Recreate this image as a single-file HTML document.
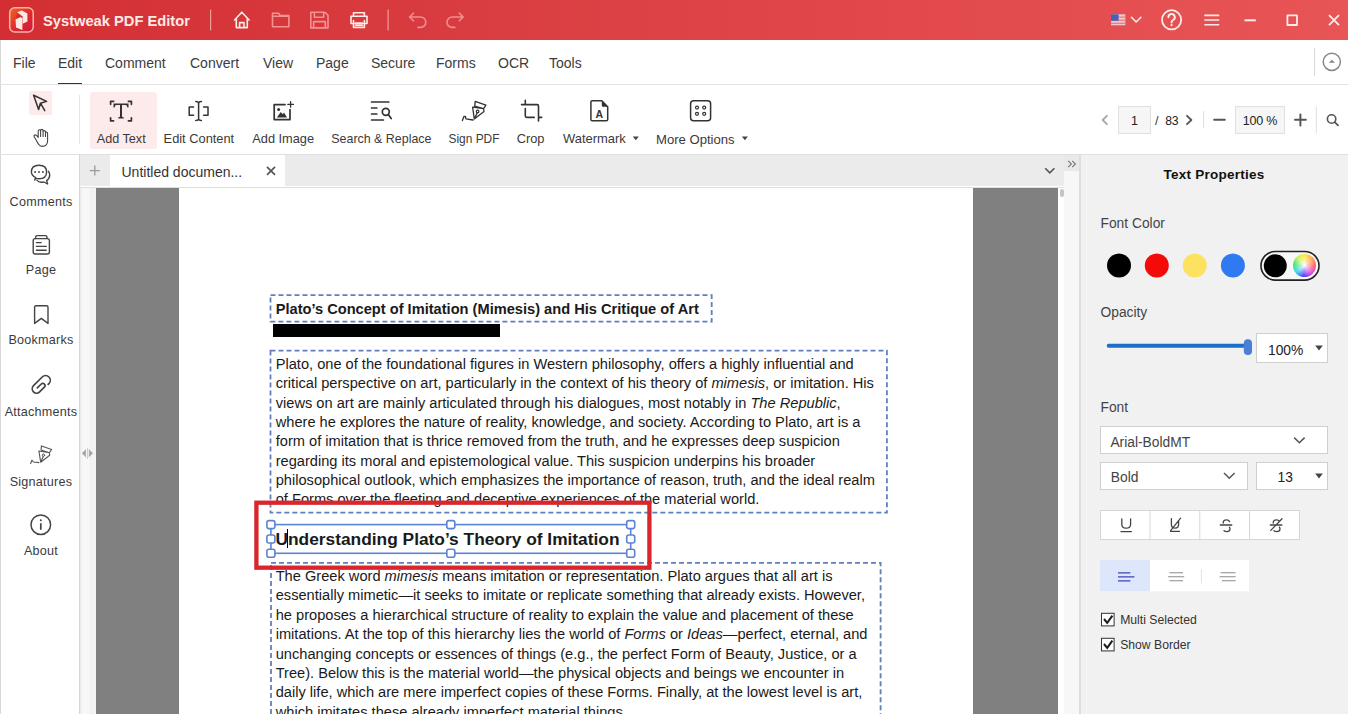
<!DOCTYPE html>
<html><head><meta charset="utf-8">
<style>
*{margin:0;padding:0;box-sizing:border-box}
html,body{width:1348px;height:714px;overflow:hidden;background:#fff;font-family:"Liberation Sans",sans-serif;color:#333}
.a{position:absolute}
.t{position:absolute;white-space:nowrap;line-height:1}
svg{position:absolute;overflow:visible}
#title{left:0;top:0;width:1348px;height:40px;background:linear-gradient(90deg,#d32f33 0%,#d93d41 35%,#e24a4d 70%,#e85556 100%)}
.menu{font-size:14px;color:#3c3c3c;top:56.4px}
.lbl{font-size:12.8px;color:#3a3a3a;top:133px}
.side{font-size:12.6px;color:#3a3a3a;letter-spacing:0.25px}
.doc{font-size:14.63px;color:#1a1a1a;line-height:19.3px;position:absolute;white-space:nowrap}
.rp{font-size:13.8px;color:#444}
</style></head><body>
<!-- TITLE BAR -->
<div id="title" class="a"></div>
<svg width="1348" height="40" style="left:0;top:0">
 <defs>
  <linearGradient id="lg" x1="0" y1="0" x2="1" y2="1">
   <stop offset="0" stop-color="#f2641c"/><stop offset="0.55" stop-color="#dc2a30"/><stop offset="1" stop-color="#d0173a"/>
  </linearGradient>
 </defs>
 <rect x="9.7" y="7.8" width="23.5" height="24.2" rx="5" fill="url(#lg)" stroke="#f6b3ac" stroke-width="1.5"/>
 <polygon points="17,12.3 21.8,10.6 27.4,13.4 27.4,21.6 22.6,23.8 22.6,16.4" fill="#fde9e4"/>
 <polygon points="15.6,19.2 20.6,16.9 22.4,18 22.4,30 16,27.6" fill="#fde9e4"/>
 <polygon points="22.4,18 22.6,16.4 17,12.3 15.6,19.2 20.6,16.9" fill="#c8202c" opacity="0.5"/>
 <!-- separators -->
 <rect x="210" y="9.5" width="1.2" height="21" fill="#f09a9a"/>
 <rect x="387.5" y="9.5" width="1.2" height="21" fill="#f09a9a"/>
 <g fill="none" stroke-width="1.6" stroke-linejoin="round" stroke-linecap="round">
  <!-- home -->
  <path d="M234.5 20 L241.8 12.2 L249.1 20 M236.3 18.2 V27.6 H247.3 V18.2 M239.6 27.6 V22.6 H244 V27.6" stroke="#fdebe8"/>
  <!-- folder -->
  <path d="M272.5 13.3 H278.5 L280.3 15.5 H288.9 V26.8 H272.5 Z M272.5 16.2 H288.9" stroke="#f39393"/>
  <!-- save -->
  <path d="M310.8 12.2 H325 L328 15.2 V27.9 H310.8 Z M314.3 12.2 V17.3 H323.7 V12.2 M313.6 27.9 V21.6 H325.3 V27.9" stroke="#f39393"/>
  <!-- print -->
  <path d="M353.5 16.3 V12.8 H364.4 V16.3 M351 16.3 H367 V23.5 H351 Z M353.5 20.5 V27.4 H364.4 V20.5 M355.6 23 H362.3 M355.6 25.3 H362.3" stroke="#fdebe8"/>
  <!-- undo -->
  <path d="M413.5 13.2 L409.6 17 L413.5 20.8 M409.8 17 H420.6 A5.2 5.2 0 0 1 420.6 27.4 H418" stroke="#f08f8f"/>
  <!-- redo -->
  <path d="M459.3 13.2 L463.2 17 L459.3 20.8 M463 17 H452.2 A5.2 5.2 0 0 0 452.2 27.4 H454.8" stroke="#f08f8f"/>
 </g>
 <!-- flag -->
 <rect x="1111" y="14.3" width="14.3" height="11" fill="#f4c6c8"/>
 <rect x="1111" y="16.5" width="14.3" height="1.2" fill="#e77b82"/>
 <rect x="1111" y="19.6" width="14.3" height="1.2" fill="#e77b82"/>
 <rect x="1111" y="22.7" width="14.3" height="1.2" fill="#e77b82"/>
 <rect x="1111" y="14.3" width="7.6" height="6.5" fill="#4a5fb8"/>
 <g fill="none" stroke="#fdebe8" stroke-width="1.6" stroke-linecap="round" stroke-linejoin="round">
  <path d="M1131.5 17.3 L1136.2 22 L1140.9 17.3"/>
  <circle cx="1171.6" cy="19.8" r="9.6" stroke-width="1.8"/>
  <path d="M1168.4 17.2 A3.2 3.2 0 1 1 1173 20.1 Q1171.6 20.8 1171.6 22.6" stroke-width="2"/>
  <path d="M1204.3 15.4 H1219.2 M1204.3 20 H1219.2 M1204.3 24.7 H1219.2" stroke-linecap="butt"/>
  <path d="M1244.5 20.3 H1255.8" stroke-width="2" stroke-linecap="butt"/>
  <rect x="1287.4" y="15.4" width="9.6" height="9.6" stroke-width="1.8"/>
  <path d="M1329 15.2 L1339 25.2 M1339 15.2 L1329 25.2" stroke-width="1.8" stroke-linecap="butt"/>
 </g>
 <circle cx="1171.6" cy="25.1" r="1.1" fill="#fdebe8"/>
</svg>
<div class="t" style="left:43px;top:13.8px;font-size:14.7px;font-weight:bold;color:#fdeae6">Systweak PDF Editor</div>

<!-- MENU BAR -->
<div class="a" style="left:0;top:40px;width:1px;height:674px;background:#d8d8d8"></div>
<div class="t menu" style="left:13px">File</div>
<div class="t menu" style="left:58px">Edit</div>
<div class="a" style="left:58px;top:83px;width:24px;height:2px;background:#333"></div>
<div class="t menu" style="left:105px">Comment</div>
<div class="t menu" style="left:190px">Convert</div>
<div class="t menu" style="left:263px">View</div>
<div class="t menu" style="left:316px">Page</div>
<div class="t menu" style="left:371px">Secure</div>
<div class="t menu" style="left:436px">Forms</div>
<div class="t menu" style="left:498px">OCR</div>
<div class="t menu" style="left:549px">Tools</div>
<div class="a" style="left:1314px;top:48px;width:1px;height:28px;background:#d8d8d8"></div>
<div class="a" style="left:0;top:84px;width:1348px;height:1px;background:#e3e3e3"></div>

<!-- TOOLBAR -->
<div class="a" style="left:28.5px;top:91px;width:23.5px;height:23.5px;background:#fdeaea;border-radius:2px"></div>
<div class="a" style="left:79px;top:95px;width:1px;height:49px;background:#e4e4e4"></div>
<div class="a" style="left:90px;top:91.5px;width:66.5px;height:57px;background:#fdeaea;border-radius:3px"></div>
<svg width="1348" height="160" style="left:0;top:0">
 <g fill="none" stroke="#333" stroke-width="1.5" stroke-linejoin="round" stroke-linecap="round">
  <!-- arrow -->
  <path d="M33.6 95.2 L46.6 101.4 L40.4 103.2 L38.6 109.5 Z M40.6 103.3 L44.8 110.6" />
  <!-- hand -->
  <path d="M36.2 140 L34.4 137.2 Q33.4 135.6 34.8 135 Q36 134.6 37.2 136.2 L38.2 137.5 V131.3 Q38.2 129.8 39.4 129.8 Q40.6 129.8 40.6 131.3 V136.4 M40.6 131.3 Q40.6 129.4 41.9 129.4 Q43.1 129.4 43.1 131.2 V136.4 M43.1 132 Q43.1 130.6 44.3 130.6 Q45.5 130.6 45.5 132 V136.4 M45.5 133.2 Q45.5 132 46.6 132 Q47.6 132 47.6 133.4 V140.6 Q47.6 146.4 42.2 146.4 Q38.8 146.4 36.2 140" stroke-width="1.1" stroke="#444"/>
  <!-- add text brackets -->
  <path d="M110.6 104.3 V101.3 H113.6 M128.4 101.3 H131.4 V104.3 M131.4 117.8 V120.8 H128.4 M113.6 120.8 H110.6 V117.8" stroke-width="1.7"/>
  <!-- edit content -->
  <path d="M193.6 106.9 H189.2 V115.3 H193.6 M203.6 106.9 H208 V115.3 H203.6 M198.6 102.6 V119.6 M195.8 101.6 Q198.6 101.6 198.6 103.4 Q198.6 101.6 201.4 101.6 M195.8 120.5 Q198.6 120.5 198.6 118.8 Q198.6 120.5 201.4 120.5"/>
  <!-- add image -->
  <path d="M285 104.6 H274.2 V119.6 H290 V109.6" stroke-width="1.7"/>
  <path d="M290.6 101.6 V107.2 M287.8 104.4 H293.4" stroke-width="1.3"/>
  <!-- search & replace -->
  <path d="M371.6 102 H388.8 M371.6 108 H376.8 M371.6 114 H376.8 M371.6 120 H383.4 M388.5 114.7 L391.2 118.6" stroke-width="1.7"/>
  <circle cx="385.8" cy="111.8" r="3.5" stroke-width="1.7"/>
  <!-- sign pdf -->
  <path d="M475.2 101.4 L485.9 105.2 L483.6 108.6 L474.7 106.1 Z M472.6 107.2 L483.6 108.6 L484 111.6 L474.3 118.9 Z M477.3 112.8 L474.6 118.4 M462.4 120.6 L464 116.3 L465.5 116.7 L465.9 118.9 L473.1 120" stroke-width="1.3"/>
  <circle cx="477.6" cy="111.4" r="1.3" stroke-width="1.2"/>
  <!-- crop -->
  <path d="M525.3 100.4 V104.6 M521.5 104.6 H537.2 Q538.5 104.6 538.5 106 V121 M525.3 108.6 V116.1 Q525.3 117.4 526.6 117.4 H534.2 M538.5 117.4 H541.7" stroke-width="1.6"/>
  <!-- watermark -->
  <path d="M601.8 100.8 H592.2 Q590.9 100.8 590.9 102.1 V119.4 Q590.9 120.7 592.2 120.7 H606.4 Q607.7 120.7 607.7 119.4 V106.8 Z" stroke-width="1.5"/>
  <!-- more options -->
  <rect x="690.6" y="100.8" width="20" height="20" rx="3" stroke-width="1.5"/>
  <circle cx="697" cy="107.6" r="1.5" stroke-width="1.2"/>
  <circle cx="704.2" cy="107.6" r="1.5" stroke-width="1.2"/>
  <circle cx="697" cy="113.8" r="1.5" stroke-width="1.2"/>
  <circle cx="704.2" cy="113.8" r="1.5" stroke-width="1.2"/>
 </g>
 <g fill="#333">
  <path d="M113.5 103.6 H128.5 V107.4 H127.4 Q127.2 105 125.2 105 H122 V116.6 Q122 117.4 123.8 117.4 V118.4 H118.2 V117.4 Q120 117.4 120 116.6 V105 H116.8 Q114.8 105 114.6 107.4 H113.5 Z"/>
  <circle cx="278.6" cy="109.6" r="1.5"/>
  <path d="M276.8 117.4 L280.8 112 L282.8 114.2 L284 112.6 L287 117.4 Z"/>
  <path d="M601.8 100.8 L607.7 106.8 H603.1 Q601.8 106.8 601.8 105.5 Z"/>
  <path d="M632.8 136.4 H638.8 L635.8 140.2 Z M741.9 136.4 H747.9 L744.9 140.2 Z" fill="#444"/>
 </g>
 <text x="599.3" y="118" font-family="Liberation Sans" font-weight="bold" font-size="10.5" fill="#333" text-anchor="middle">A</text>
</svg>
<div class="t lbl" style="left:71.2px;width:100px;text-align:center;font-size:12.65px">Add Text</div>
<div class="t lbl" style="left:148.9px;width:100px;text-align:center;font-size:12.84px">Edit Content</div>
<div class="t lbl" style="left:233.2px;width:100px;text-align:center;font-size:12.79px">Add Image</div>
<div class="t lbl" style="left:331.3px;width:100px;text-align:center;font-size:12.43px">Search &amp; Replace</div>
<div class="t lbl" style="left:424px;width:100px;text-align:center;font-size:11.9px;top:133.7px">Sign PDF</div>
<div class="t lbl" style="left:480.6px;width:100px;text-align:center;font-size:12.8px">Crop</div>
<div class="t lbl" style="left:544.4px;width:100px;text-align:center;font-size:12.95px">Watermark</div>
<div class="t lbl" style="left:645.3px;width:100px;text-align:center;font-size:13.1px">More Options</div>

<!-- page nav -->
<svg width="1348" height="160" style="left:0;top:0">
 <g fill="none" stroke-width="1.5" stroke-linecap="round" stroke-linejoin="round">
  <path d="M1107 115.8 L1102.6 120 L1107 124.2" stroke="#a8a8a8" stroke-width="1.8"/>
  <path d="M1187 115.8 L1191.4 120 L1187 124.2" stroke="#555" stroke-width="1.8"/>
  <path d="M1214.2 119.8 H1224.8" stroke="#555" stroke-width="2"/>
  <path d="M1295 119.8 H1305.8 M1300.4 114.4 V125.4" stroke="#555" stroke-width="2"/>
  <circle cx="1331.6" cy="119" r="4.2" stroke="#555" stroke-width="1.6"/>
  <path d="M1334.7 122.1 L1338 125.4" stroke="#555" stroke-width="1.8"/>
  <circle cx="1331.8" cy="61.8" r="8.6" stroke="#888" stroke-width="1.5"/>
 </g>
 <path d="M1328.7 62.7 L1331.9 59.7 L1335.1 62.7 Z" fill="#888"/>
 <rect x="1203" y="111" width="1" height="17" fill="#e0e0e0"/>
 <rect x="1315.8" y="106.4" width="1" height="27" fill="#e0e0e0"/>
 <rect x="1118.5" y="106.5" width="32" height="27" fill="#f6f6f6" stroke="#e0e0e0" stroke-width="1"/>
 <rect x="1235.5" y="106.5" width="49" height="27" fill="#f6f6f6" stroke="#e0e0e0" stroke-width="1"/>
</svg>
<div class="t" style="left:1118.5px;width:32px;text-align:center;top:114.6px;font-size:12.5px;color:#222">1</div>
<div class="t" style="left:1155px;top:114.6px;font-size:12.5px;color:#333">/</div><div class="t" style="left:1165.3px;top:114.6px;font-size:12.2px;color:#222;letter-spacing:-0.4px">83</div>
<div class="t" style="left:1235.5px;width:49px;text-align:center;top:114.7px;font-size:12.5px;color:#222;letter-spacing:-0.15px">100 %</div>
<div class="a" style="left:0;top:154px;width:1348px;height:1px;background:#e0e0e0"></div>

<!-- LEFT SIDEBAR -->
<div class="a" style="left:79px;top:155px;width:1.6px;height:559px;background:#d6d6d6"></div>
<svg width="80" height="714" style="left:0;top:0">
 <g fill="none" stroke="#444" stroke-width="1.4" stroke-linejoin="round" stroke-linecap="round">
  <!-- comments -->
  <path d="M34.6 180 L35.8 177.6 Q31.4 175.4 31.4 172 Q31.4 165.3 39 165.3 Q46.6 165.3 46.6 172 Q46.6 178.7 39 178.7 Q37.4 178.7 36 178.3 Z"/>
  <path d="M48.4 171.2 Q49.7 172.8 49.7 175 Q49.7 178.6 46.6 180.6 L47.6 184 L43.8 182 Q42.2 182.3 41 182.3 Q38.6 182.3 37 180.4"/>
  <!-- page -->
  <rect x="33.2" y="238.6" width="16.2" height="15.4" rx="2"/>
  <path d="M35.6 238.6 V237.2 Q35.6 235.6 37.2 235.6 H45.4 Q47 235.6 47 237.2 V238.6"/>
  <path d="M36.4 242.6 H41.2 M36.4 246.4 H46.2 M36.4 250.2 H46.2"/>
  <!-- bookmark -->
  <path d="M34.6 323.4 V307.2 Q34.6 305.8 36 305.8 H46.6 Q48 305.8 48 307.2 V323.4 L41.3 318.4 Z"/>
  <!-- attachment -->
  <g transform="translate(41.6,384.3) rotate(45) scale(1.08)">
   <path d="M4.4 -4.2 V-5.2 A4.4 4.4 0 0 0 -4.4 -5.2 V6.2 A4 4 0 0 0 3.6 6.2 V0 A2 2 0 0 0 -0.4 0 V5.2" stroke-width="1.55"/>
  </g>
  <!-- signatures -->
  <path d="M41.4 445.9 L51.7 449.4 L49.4 452.8 L41.1 450.1 Z M38.9 451 L49.4 452.8 L49.7 455.2 L40.7 462.2 Z M43.2 456.5 L40.9 461.8 M30.6 463.5 L31.9 460.2 L33.5 462 L38.9 462.6" stroke-width="1.1" stroke="#555"/>
  <circle cx="43.4" cy="455.2" r="1.2" stroke-width="1" stroke="#555"/>
  <!-- about -->
  <circle cx="40.8" cy="524.7" r="9.8" stroke-width="1.5"/>
  <path d="M40.8 523.2 V529.8" stroke-width="1.7" stroke-linecap="butt"/>
 </g>
 <circle cx="35.1" cy="172" r="0.95" fill="#444"/><circle cx="39" cy="172" r="0.95" fill="#444"/><circle cx="42.9" cy="172" r="0.95" fill="#444"/>
 <circle cx="40.8" cy="520.3" r="1" fill="#444"/>
</svg>
<div class="t side" style="left:0;width:82px;text-align:center;top:196.4px">Comments</div>
<div class="t side" style="left:0;width:82px;text-align:center;top:264px">Page</div>
<div class="t side" style="left:0;width:82px;text-align:center;top:334.2px">Bookmarks</div>
<div class="t side" style="left:0;width:82px;text-align:center;top:406.2px">Attachments</div>
<div class="t side" style="left:0;width:82px;text-align:center;top:475.9px">Signatures</div>
<div class="t side" style="left:0;width:82px;text-align:center;top:545.3px">About</div>

<!-- TAB BAR -->
<div class="a" style="left:80px;top:155px;width:984px;height:31px;background:#ebebeb"></div>
<div class="a" style="left:110px;top:155px;width:175px;height:31px;background:#fff"></div>
<div class="t" style="left:121.5px;top:165px;font-size:14px;color:#333">Untitled documen...</div>
<svg width="1348" height="200" style="left:0;top:0">
 <path d="M94.8 165.6 V175.6 M89.8 170.6 H99.8" stroke="#9a9a9a" stroke-width="1.3" fill="none"/>
 <path d="M267 166.8 L275 174.8 M275 166.8 L267 174.8" stroke="#555" stroke-width="1.7" fill="none"/>
 <path d="M1045.2 168.2 L1049.8 172.8 L1054.4 168.2" stroke="#555" stroke-width="1.6" fill="none"/>
</svg>

<!-- DOC AREA -->
<div class="a" style="left:80px;top:186px;width:984px;height:1px;background:#fff"></div><div class="a" style="left:80px;top:187px;width:984px;height:1px;background:#dedede"></div>
<div class="a" style="left:80px;top:188px;width:16px;height:526px;background:linear-gradient(90deg,#e6e6e6 0,#f4f4f4 1.5px,#f8f8f8 4px,#f8f8f8 9px,#f2f2f2 10px,#f4f4f4 16px)"></div>
<div class="a" style="left:96px;top:188px;width:83px;height:526px;background:#808080"></div>
<div class="a" style="left:179px;top:188px;width:794px;height:526px;background:#fff"></div>
<div class="a" style="left:973px;top:188px;width:85px;height:526px;background:#808080"></div>
<div class="a" style="left:1058px;top:188px;width:6px;height:526px;background:#fff"></div>

<!-- collapse handle -->
<svg width="20" height="20" style="left:80px;top:444px">
 <path d="M5.9 5.3 L1.8 9.3 L5.9 13.3 Z M8.9 5.3 L13 9.3 L8.9 13.3 Z" fill="#a6a6a6"/>
 <rect x="6.9" y="4" width="1.2" height="11" fill="#cfcfcf"/>
</svg>
<!-- DOCUMENT CONTENT -->
<svg width="1348" height="714" style="left:0;top:0">
 <g fill="none" stroke="#5f7fbf" stroke-width="1.8" stroke-dasharray="5 3">
  <rect x="270.5" y="295.2" width="441.2" height="26.5"/>
  <rect x="270.5" y="350.6" width="616.4" height="162"/>
  <rect x="271" y="562.8" width="609.6" height="170"/>
 </g>
</svg>
<div class="a" style="left:273px;top:324px;width:227px;height:13px;background:#000"></div>
<div class="doc" style="left:275.7px;top:301.5px;line-height:1;font-weight:bold">Plato’s Concept of Imitation (Mimesis) and His Critique of Art</div>
<div class="doc" style="left:275.7px;top:355.2px;line-height:19.27px">Plato, one of the foundational figures in Western philosophy, offers a highly influential and<br>critical perspective on art, particularly in the context of his theory of <i>mimesis</i>, or imitation. His<br>views on art are mainly articulated through his dialogues, most notably in <i>The Republic</i>,<br>where he explores the nature of reality, knowledge, and society. According to Plato, art is a<br>form of imitation that is thrice removed from the truth, and he expresses deep suspicion<br>regarding its moral and epistemological value. This suspicion underpins his broader<br>philosophical outlook, which emphasizes the importance of reason, truth, and the ideal realm<br>of Forms over the fleeting and deceptive experiences of the material world.</div>
<div class="doc" style="left:275.7px;top:567px;line-height:19.4px">The Greek word <i>mimesis</i> means imitation or representation. Plato argues that all art is<br>essentially mimetic—it seeks to imitate or replicate something that already exists. However,<br>he proposes a hierarchical structure of reality to explain the value and placement of these<br>imitations. At the top of this hierarchy lies the world of <i>Forms</i> or <i>Ideas</i>—perfect, eternal, and<br>unchanging concepts or essences of things (e.g., the perfect Form of Beauty, Justice, or a<br>Tree). Below this is the material world—the physical objects and beings we encounter in<br>daily life, which are mere imperfect copies of these Forms. Finally, at the lowest level is art,<br>which imitates these already imperfect material things.</div>
<div class="doc" style="left:275.5px;top:530.8px;line-height:1;font-weight:bold;font-size:17.33px">Understanding Plato’s Theory of Imitation</div>
<div class="a" style="left:287px;top:529px;width:1px;height:19px;background:#000"></div>
<svg width="1348" height="714" style="left:0;top:0">
 <rect x="256.4" y="502.7" width="393" height="65" fill="none" stroke="#d8262c" stroke-width="4.3"/>
 <rect x="270.9" y="524.6" width="359.8" height="28.7" fill="none" stroke="#5b83d4" stroke-width="1.6"/>
 <g fill="#fff" stroke="#5b83d4" stroke-width="1.6">
  <rect x="266.9" y="520.6" width="8" height="8" rx="2"/>
  <rect x="446.8" y="520.6" width="8" height="8" rx="2"/>
  <rect x="626.7" y="520.6" width="8" height="8" rx="2"/>
  <rect x="266.9" y="535" width="8" height="8" rx="2"/>
  <rect x="626.7" y="535" width="8" height="8" rx="2"/>
  <rect x="266.9" y="549.3" width="8" height="8" rx="2"/>
  <rect x="446.8" y="549.3" width="8" height="8" rx="2"/>
  <rect x="626.7" y="549.3" width="8" height="8" rx="2"/>
 </g>
</svg>

<!-- RIGHT DIVIDER / PANEL -->
<div class="a" style="left:1064px;top:155px;width:16px;height:559px;background:#f7f7f7"></div>
<div class="a" style="left:1064px;top:155px;width:16px;height:15.5px;background:#e9e9e9"></div>
<svg width="20" height="20" style="left:1064px;top:155px"><path d="M4.2 5.8 L7.4 9 L4.2 12.2 M8.2 5.8 L11.4 9 L8.2 12.2" stroke="#777" stroke-width="1.1" fill="none"/></svg>
<div class="a" style="left:1079px;top:155px;width:2px;height:559px;background:#dedede"></div>
<div class="a" style="left:1081px;top:155px;width:267px;height:559px;background:#f1f1f1"></div><div class="a" style="left:1085.5px;top:155px;width:1px;height:559px;background:#f6f6f6"></div>
<div class="t" style="left:1114px;width:200px;text-align:center;top:168.4px;font-size:13.5px;font-weight:bold;color:#111;letter-spacing:0.25px">Text Properties</div>
<div class="t rp" style="left:1100.5px;top:216.6px">Font Color</div>
<div class="t rp" style="left:1100.5px;top:306.2px">Opacity</div>
<div class="t rp" style="left:1100.5px;top:400.6px">Font</div>
<svg width="1348" height="714" style="left:0;top:0">
 <defs>
  <radialGradient id="cw" cx="0.5" cy="0.5" r="0.5">
   <stop offset="0" stop-color="#fff"/><stop offset="0.35" stop-color="#fff" stop-opacity="0.6"/><stop offset="1" stop-color="#fff" stop-opacity="0"/>
  </radialGradient>
  <linearGradient id="cw1" x1="0" y1="0" x2="1" y2="1">
   <stop offset="0" stop-color="#7be07b"/><stop offset="0.5" stop-color="#f5c06a"/><stop offset="1" stop-color="#e0507a"/>
  </linearGradient>
  <linearGradient id="cw2" x1="0" y1="1" x2="1" y2="0">
   <stop offset="0" stop-color="#5a4ee8" stop-opacity="0.9"/><stop offset="0.5" stop-color="#5a4ee8" stop-opacity="0"/>
  </linearGradient>
 </defs>
 <circle cx="1119" cy="265.5" r="12" fill="#000"/>
 <circle cx="1156.8" cy="265.5" r="12" fill="#f50a0a"/>
 <circle cx="1194.8" cy="265.5" r="12" fill="#fde262"/>
 <circle cx="1232.9" cy="265.5" r="12" fill="#2f7af0"/>
 <rect x="1261" y="251.5" width="58" height="28.6" rx="14.3" fill="#f8f8f8" stroke="#222" stroke-width="1.6"/>
 <circle cx="1275.3" cy="265.8" r="11.5" fill="#000"/>
 <!-- slider -->
 <rect x="1106.7" y="343.8" width="141" height="4" rx="2" fill="#1b6fc8"/>
 <rect x="1243.8" y="339.3" width="8.2" height="15.6" rx="4" fill="#4a7fd6"/>
 <rect x="1256.5" y="333.5" width="71" height="29" fill="#fff" stroke="#cfcfcf" stroke-width="1"/>
 <path d="M1315.2 345.6 H1322.8 L1319 350.4 Z" fill="#444"/>
 <!-- font dropdowns -->
 <rect x="1100.5" y="426.5" width="227" height="27" fill="#fff" stroke="#cfcfcf" stroke-width="1"/>
 <path d="M1294.2 437.6 L1299.4 442.8 L1304.6 437.6" fill="none" stroke="#555" stroke-width="1.5"/>
 <rect x="1100.5" y="462.5" width="147" height="27" fill="#fff" stroke="#cfcfcf" stroke-width="1"/>
 <path d="M1224 473 L1229.3 478.3 L1234.6 473" fill="none" stroke="#555" stroke-width="1.5"/>
 <rect x="1256.5" y="462.5" width="71" height="27" fill="#fff" stroke="#cfcfcf" stroke-width="1"/>
 <path d="M1315.2 473.6 H1322.8 L1319 478.4 Z" fill="#444"/>
 <!-- style buttons -->
 <rect x="1100.5" y="510.5" width="199" height="29" fill="#fff" stroke="#d6d6d6" stroke-width="1"/>
 <path d="M1150 511 V539 M1199.8 511 V539 M1249.6 511 V539" stroke="#d6d6d6" stroke-width="1"/>
 <g fill="none" stroke="#444" stroke-width="1.3" stroke-linecap="round">
  <path d="M1121.8 518.8 V524.2 Q1121.8 528.2 1126.2 528.2 Q1130.6 528.2 1130.6 524.2 V518.8 M1121 531.6 H1131.4"/>
  <path d="M1171.4 518.6 V524.6 Q1171.4 528.2 1175 528.2 Q1178.6 528.2 1178.6 524.6 V521 M1170.6 531.4 H1179.4 M1170.6 530.6 L1180.6 518.2"/>
  <path d="M1223.2 523 Q1223.2 519.9 1226.4 519.9 Q1228.8 519.9 1229.6 521.6 M1220.3 525 H1231.8 M1229.4 527.2 Q1230 528 1230 529 Q1230 531.6 1226.6 531.6 Q1224.8 531.6 1224 530.6"/>
  <path d="M1273.2 523 Q1273.2 519.9 1276.4 519.9 Q1278.8 519.9 1279.6 521.6 M1270.3 525 H1281.8 M1279.4 527.2 Q1280 528 1280 529 Q1280 531.6 1276.6 531.6 Q1274.8 531.6 1274 530.6 M1270.8 530.4 L1282 518.8"/>
 </g>
 <!-- align buttons -->
 <rect x="1100" y="560" width="149" height="31.4" fill="#fff"/>
 <rect x="1100" y="560" width="50" height="31.4" fill="#dde6fa"/>
 <path d="M1201.4 569.4 V583.4" stroke="#e2e2e2" stroke-width="1"/>
 <g stroke-width="1.3" fill="none">
  <path d="M1118 572.8 H1130.4 M1118 576.8 H1134.4 M1118 580.8 H1130.4" stroke="#3b46b8"/>
  <path d="M1169.4 572.8 H1183 M1168.2 576.8 H1184.2 M1169.4 580.8 H1183" stroke="#8a8a8a" stroke-width="1.1"/>
  <path d="M1220.6 572.8 H1235.6 M1219.6 576.8 H1235.6 M1222 580.8 H1235.6" stroke="#8a8a8a" stroke-width="1.1"/>
 </g>
 <!-- checkboxes -->
 <rect x="1101.5" y="613.3" width="12.6" height="12.6" fill="#fff" stroke="#333" stroke-width="1"/>
 <path d="M1104 619 L1107.2 622.8 L1112.4 615.6" fill="none" stroke="#1a1a1a" stroke-width="2"/>
 <rect x="1101.5" y="638.3" width="12.6" height="12.6" fill="#fff" stroke="#333" stroke-width="1"/>
 <path d="M1104 644 L1107.2 647.8 L1112.4 640.6" fill="none" stroke="#1a1a1a" stroke-width="2"/>
</svg>
<div class="a" style="left:1292.9px;top:253.8px;width:22.8px;height:22.8px;border-radius:50%;background:radial-gradient(circle,#fff 0%,rgba(255,255,255,0.6) 22%,rgba(255,255,255,0) 65%),conic-gradient(#ffe84a,#ffa050 50deg,#ff5a70 95deg,#e444e4 140deg,#4c44f0 185deg,#44d4f4 230deg,#44e47a 275deg,#c8f458 320deg,#ffe84a)"></div>
<div class="a" style="left:1058px;top:189px;width:6px;height:8px;border-radius:2px;background:#c4c4c4;left:1059.5px;width:4.5px"></div>
<div class="t" style="left:1268px;top:343.8px;font-size:13.8px;color:#222">100%</div>
<div class="t" style="left:1110.4px;top:435.8px;font-size:13.8px;color:#444">Arial-BoldMT</div>
<div class="t" style="left:1110.8px;top:470.8px;font-size:13.8px;color:#444">Bold</div>
<div class="t" style="left:1277.6px;top:471px;font-size:13.8px;color:#222">13</div>
<div class="t" style="left:1120.2px;top:614px;font-size:12.2px;color:#333">Multi Selected</div>
<div class="t" style="left:1120.2px;top:638.6px;font-size:12.2px;color:#333">Show Border</div>

</body></html>
